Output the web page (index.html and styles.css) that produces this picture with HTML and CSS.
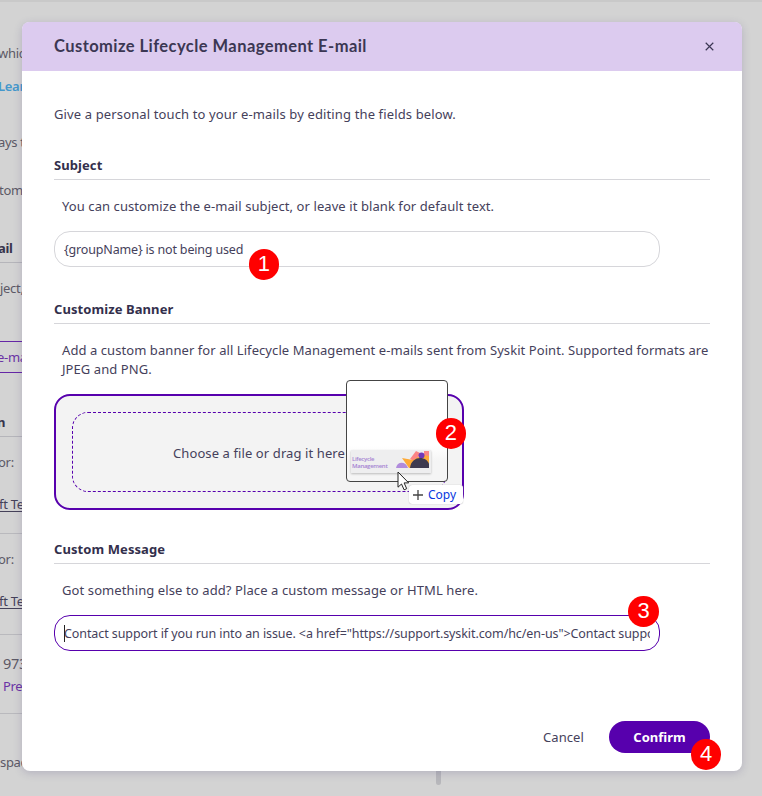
FILE: index.html
```html
<!DOCTYPE html>
<html lang="en">
<head>
<meta charset="utf-8">
<title>Customize Lifecycle Management E-mail</title>
<link rel="stylesheet" href="styles.css">
</head>
<body>
<div class="page">
  <aside class="backdrop">
    <p class="gap-whic">whic</p>
    <p class="gap-learn link">Lear</p>
    <p class="gap-days">ays t</p>
    <p class="gap-custom">tom</p>
    <h4 class="gap-mail">ail</h4>
    <p class="gap-subject">ject,</p>
    <div class="ghost-button">e-ma</div>
    <h4 class="gap-action">n</h4>
    <p class="gap-for">or:</p>
    <p class="gap-team team">ft Te</p>
    <p class="gap-for2 ruled">or:</p>
    <p class="gap-team2 team">ft Te</p>
    <p class="gap-count ruled count">973</p>
    <p class="preview">Pre</p>
    <p class="gap-space ruled">spac</p>
  </aside>
  <div class="scroll-thumb"></div>

  <section class="modal" role="dialog">
    <header class="modal-header">
      <h1>Customize Lifecycle Management E-mail</h1>
      <svg class="close" viewBox="0 0 10 10"><path d="M.8 .8 9.2 9.2M9.2 .8 .8 9.2"/></svg>
    </header>
    <div class="modal-body">
      <p class="intro">Give a personal touch to your e-mails by editing the fields below.</p>

      <h2>Subject</h2>
      <p class="hint hint-subject">You can customize the e-mail subject, or leave it blank for default text.</p>
      <div class="field">
        <span class="value value-subject">{groupName} is not being used</span>
        <span class="badge badge-1">1</span>
      </div>

      <h2 class="h-banner">Customize Banner</h2>
      <p class="hint hint-banner">Add a custom banner for all Lifecycle Management e-mails sent from Syskit Point. Supported formats are<br>JPEG and PNG.</p>
      <div class="drop">
        <div class="drop-inner"><span>Choose a file or drag it here</span></div>
        <div class="drag-preview">
          <div class="thumb">
            <span class="thumb-text">Lifecycle<br>Management</span>
            <svg class="thumb-art" viewBox="0 0 34 18">
              <path d="M14 8 20 0l4 2-4 9z" fill="#fb8585"/>
              <path d="M6 7l11 2 5-3 11-4v15H13z" fill="#fdaa38"/>
              <path d="M28 0h5v5l-5-1z" fill="#fb8585"/>
              <circle cx="25.5" cy="4.5" r="3" fill="#7038b8"/>
              <path d="M0 17c1-7 10-7 12 0z" fill="#b08bdc"/>
              <path d="M14 17c1-12 16-13 19-4v4z" fill="#3e3b50"/>
            </svg>
          </div>
        </div>
        <div class="copy-tip"><svg viewBox="0 0 10 10"><path d="M5 0v10M0 5h10"/></svg><span>Copy</span></div>
        <svg class="cursor" viewBox="0 0 13 20"><path d="M1 1v15.2l3.5-3.2 2.6 5.8 2.6-1.1-2.6-5.8h4.6z"/></svg>
        <span class="badge badge-2">2</span>
      </div>

      <h2 class="h-message">Custom Message</h2>
      <p class="hint hint-message">Got something else to add? Place a custom message or HTML here.</p>
      <div class="field focused">
        <span class="value value-message">Contact support if you run into an issue. &lt;a href="https://support.syskit.com/hc/en-us"&gt;Contact support</span>
        <span class="badge badge-3">3</span>
      </div>

      <footer class="actions">
        <span class="cancel">Cancel</span>
        <button class="confirm"><span>Confirm</span></button>
        <span class="badge badge-4">4</span>
      </footer>
    </div>
  </section>
</div>
</body>
</html>
```

FILE: styles.css
```css
* { box-sizing: border-box; margin: 0; padding: 0; }
body {
  width: 762px;
  height: 796px;
  overflow: hidden;
  background: #d3d3d3;
  color: #45415b;
  font: 13px/19px "Noto Sans", "Open Sans", sans-serif;
}
.page {
  position: relative;
  height: 796px;
  padding: 20px 20px 0 22px;
  border-top: 2px solid #c9c9c9;
}

/* dimmed page behind the dialog */
.backdrop {
  position: absolute;
  left: 0;
  top: 0;
  width: 22px;
  height: 794px;
  overflow: hidden;
  line-height: 20px;
  letter-spacing: -.3px;
  white-space: nowrap;
  color: #5c5966;
}
.backdrop p, .backdrop h4 { height: 20px; }
.backdrop h4 {
  height: 25px;
  font-size: 13px;
  border-bottom: 1px solid #b5b5ba;
  color: #37334b;
}
.gap-whic { margin-top: 41px; text-indent: -2px; }
.backdrop .gap-learn { margin-top: 13px; height: 21px; text-indent: -2px; }
.link { color: #4598cc; font-weight: 600; }
.gap-days { margin-top: 35px; text-indent: -2px; }
.gap-custom { margin-top: 28px; text-indent: -1px; }
.gap-mail { margin-top: 38px; text-indent: -2px; }
.gap-subject { margin-top: 15px; }
.ghost-button {
  height: 32px;
  margin-top: 43px;
  border: solid #6527a6;
  border-width: 1px 0;
  line-height: 30px;
  text-indent: -3px;
  color: #6a32a5;
}
.gap-action { margin-top: 39px; text-indent: -3px; }
.gap-for { margin-top: 15px; text-indent: -2px; }
.backdrop .team { height: 18px; border-bottom: 1px solid #454159; color: #45415a; text-indent: -1px; }
.gap-team { margin-top: 22px; }
.ruled { position: relative; }
.ruled::before {
  content: "";
  position: absolute;
  left: 0;
  right: 0;
  top: -17px;
  border-top: 1px solid #b9b9bd;
}
.gap-for2 { margin-top: 37px; text-indent: -2px; }
.gap-for2.ruled::before { top: -16px; }
.gap-team2 { margin-top: 22px; }
.gap-count { margin-top: 44px; font-size: 14.5px; padding-left: 3px; }
.gap-count::before { top: -19px; }
.preview { margin-top: 3px; padding-left: 3px; color: #6a32a5; }
.gap-space { margin-top: 56px; }
.gap-space::before { top: -39px; }
.scroll-thumb {
  position: absolute;
  left: 436px;
  top: 740px;
  width: 5px;
  height: 43px;
  border-radius: 3px;
  background: #b7b7bb;
}

.modal {
  position: relative;
  width: 720px;
  height: 749px;
  border-radius: 8px;
  background: #fff;
  box-shadow: 0 2px 9px rgba(70, 60, 120, .22);
}
.modal-header {
  display: flex;
  align-items: center;
  justify-content: space-between;
  height: 49px;
  padding: 0 28px 0 32px;
  border-radius: 7px 7px 0 0;
  background: #dccbef;
}
h1 {
  padding-bottom: 1px;
  font: 700 16.5px/20px Lato, "Open Sans", sans-serif;
  letter-spacing: .44px;
  white-space: nowrap;
  color: #3b3753;
}
.close { width: 9px; height: 9px; fill: none; stroke: #3b3753; stroke-width: 1.3; }
.modal-body { padding: 34px 32px 0; }
.intro { margin-bottom: 31px; white-space: nowrap; letter-spacing: .13px; }
h2 {
  height: 25px;
  margin-bottom: 17px;
  border-bottom: 1px solid #d6d6da;
  font-size: 13px;
  line-height: 20px;
  font-weight: 700;
  letter-spacing: .08px;
  color: #332f4c;
}
.h-banner { margin-top: 32px; }
.h-message { margin-top: 29px; }
.hint { margin: 0 0 15px 8px; white-space: nowrap; letter-spacing: .1px; }
.hint-subject { letter-spacing: .08px; }
.hint-banner { letter-spacing: .07px; }
.field {
  position: relative;
  display: flex;
  align-items: center;
  width: 606px;
  height: 36px;
  padding: 0 9px;
  border: 1px solid #d6d6da;
  border-radius: 16px;
}
.focused { border-color: #5700ad; }
.value { flex: 1; overflow: hidden; white-space: nowrap; font-size: 12.5px; }
.value-subject { letter-spacing: -.17px; }
.value-message { position: relative; letter-spacing: -.085px; }
.value-message::before {
  content: "";
  position: absolute;
  left: 0;
  top: 1px;
  height: 17px;
  border-left: 1px solid #222;
}
.badge {
  position: absolute;
  width: 30.6px;
  height: 30.6px;
  border-radius: 50%;
  background: #f00;
  color: #fff;
  font: 22px/30px "Liberation Sans", sans-serif;
  text-align: center;
}
.badge-1 { left: 193.7px; top: 17.4px; }
.badge-2 { left: 379.6px; top: 22.4px; }
.badge-3 { left: 573.4px; top: -19.6px; }
.badge-4 { right: -11.3px; top: 18.4px; }
.drop {
  position: relative;
  width: 410px;
  height: 116px;
  padding: 16px;
  border: 2px solid #5700ad;
  border-radius: 16px;
  background: #f3f3f3;
}
.drop-inner {
  display: flex;
  align-items: center;
  justify-content: center;
  height: 80px;
  padding-top: 2px;
  border: 1px dashed #5700ad;
  border-radius: 16px;
  white-space: nowrap;
  letter-spacing: .1px;
}
.drag-preview {
  position: absolute;
  left: 290px;
  top: -16px;
  width: 102px;
  height: 102px;
  padding: 69px 4px 0;
  border: 1px solid #444;
  border-radius: 4px;
  background: linear-gradient(#fff 65%, #f5f5f5 80%);
}
.thumb {
  display: flex;
  justify-content: space-between;
  width: 80px;
  height: 23px;
  padding: 1px 1px 0 1px;
  background: #eeeeef;
  box-shadow: 0 1px 2px #bbb;
}
.thumb-text {
  padding-top: 5px;
  font: 600 6px/6.5px "Open Sans", sans-serif;
  letter-spacing: -.3px;
  color: #a583d2;
}
.thumb-art { width: 34px; height: 18px; flex: none; }
.copy-tip {
  position: absolute;
  left: 353px;
  top: 89px;
  display: flex;
  align-items: center;
  gap: 5px;
  width: 54px;
  height: 19px;
  padding-left: 4px;
  border-radius: 3px;
  background: #fff;
  box-shadow: 0 0 1px #999;
  font-size: 12px;
  color: #0838e0;
}
.copy-tip svg { width: 10px; height: 10px; stroke: #444; stroke-width: 1.3; }
.cursor {
  position: absolute;
  left: 341px;
  top: 75px;
  width: 13px;
  height: 20px;
  fill: #fff;
  stroke: #222;
}
.actions {
  position: relative;
  display: flex;
  align-items: center;
  justify-content: flex-end;
  gap: 25px;
  margin-top: 70px;
}
.cancel { letter-spacing: .1px; }
.confirm {
  width: 101px;
  height: 32px;
  border: 0;
  border-radius: 16px;
  background: #5700ad;
  color: #fff;
  font: 700 13px/19px "Noto Sans", sans-serif;
}
```
